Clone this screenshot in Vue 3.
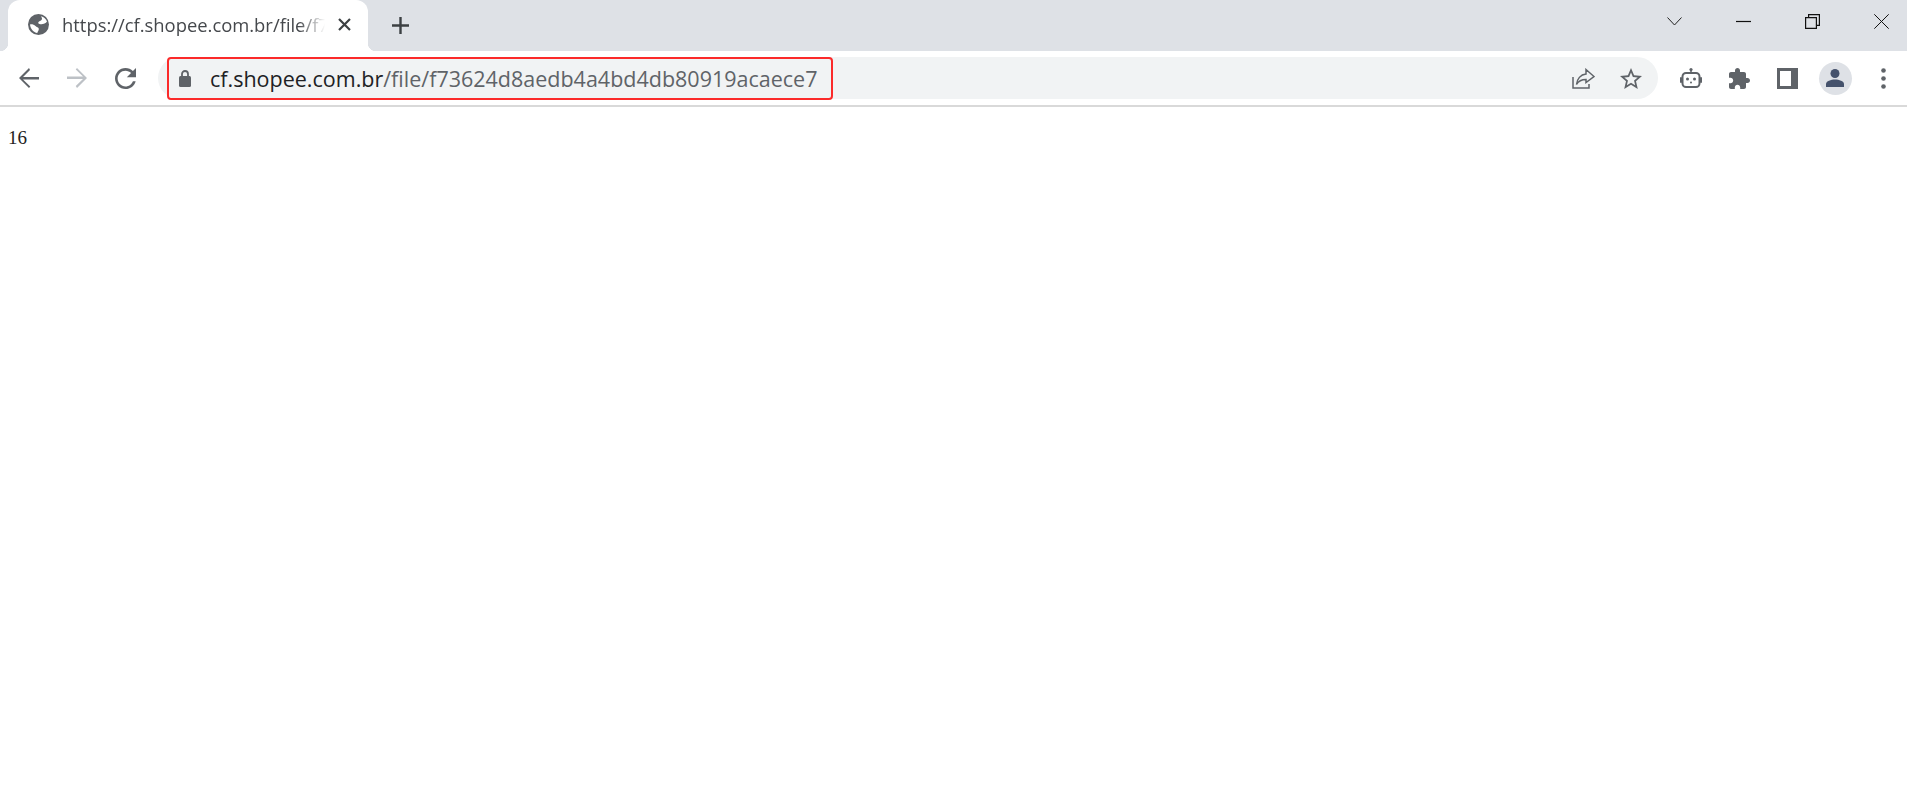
<script setup>
const host = 'cf.shopee.com.br'
const path = '/file/f73624d8aedb4a4bd4db80919acaece7'
</script>

<template>
  <div class="page">
    <div class="tabstrip">
      <div class="tab">
        <svg class="globe" viewBox="0 0 21 21"><circle cx="10.5" cy="10.5" r="10.5" fill="#5f6368"/><path d="M13 2.2 C16 3 18 5 19 7.5 C17.5 10 14 10.5 11.5 10 C10.5 9.8 9.8 9 10.5 8 C11.5 6.8 13.8 6.8 14 5 C14.1 4 13.4 3 13 2.2 Z" fill="#fff"/><path d="M2 10.5 C4 10 6 10.8 7.5 12 C8.5 13 10.5 13.2 10.8 14.8 C11 16.5 9.5 17.5 9.3 19 C5.5 18.5 2.5 15 2 10.5 Z" fill="#fff"/></svg>
        <span class="tab-title">https://cf.shopee.com.br/file/f73624d8aedb4a4bd4db80919acaece7</span>
        <svg class="tab-x" viewBox="0 0 13 13"><path d="M1 1 L12 12 M12 1 L1 12" stroke="#3c4043" stroke-width="2.2"/></svg>
      </div>
      <svg class="plus" viewBox="0 0 17 17"><path d="M8.5 0 V17 M0 8.5 H17" stroke="#3c4043" stroke-width="2.4"/></svg>
      <div class="win">
        <svg class="w" viewBox="0 0 15 15"><path d="M0.5 3.5 L7.5 11 L14.5 3.5" fill="none" stroke="#222" stroke-width="1"/></svg>
        <svg class="w" viewBox="0 0 15 15"><path d="M0 7.5 H15" stroke="#111" stroke-width="1.2"/></svg>
        <svg class="w" viewBox="0 0 15 15"><path d="M0.6 3.6 H11.4 V14.4 H0.6 Z M3.6 3.6 V0.6 H14.4 V11.4 H11.4" fill="none" stroke="#111" stroke-width="1.2"/></svg>
        <svg class="w" viewBox="0 0 15 15"><path d="M0.3 0.3 L14.7 14.7 M14.7 0.3 L0.3 14.7" stroke="#111" stroke-width="1"/></svg>
      </div>
    </div>
    <div class="toolbar">
      <div class="nav">
        <span class="btn"><svg class="ic arrow" viewBox="4 4 16 16"><path d="M20 11.2H7.2l5.6-5.6L12 4l-8 8 8 8 1-1.2-5.8-5.6H20v-2z" fill="#5f6368"/></svg></span>
        <span class="btn"><svg class="ic arrow" viewBox="4 4 16 16"><path d="M12 4l-1 1.2 5.8 5.6H4v2h12.8l-5.8 5.6L12 20l8-8z" fill="#bdc1c6"/></svg></span>
        <span class="btn"><svg class="ic" viewBox="4 4 16 16"><path d="M17.65 6.35C16.2 4.9 14.21 4 12 4c-4.42 0-7.99 3.58-7.99 8s3.57 8 7.99 8c3.73 0 6.84-2.55 7.73-6h-2.08c-.82 2.33-3.04 4-5.65 4-3.31 0-6-2.69-6-6s2.69-6 6-6c1.66 0 3.14.69 4.22 1.78L13 11h7V4l-2.35 2.35z" fill="#5f6368"/></svg></span>
      </div>
      <div class="omni">
        <div class="omni-main">
          <svg class="lock" viewBox="0 0 12 17"><path d="M3 7 V4 A3 3 0 0 1 9 4 V7" fill="none" stroke="#5f6368" stroke-width="1.8"/><rect x="0" y="6" width="12" height="11" rx="1.5" fill="#5f6368"/></svg>
          <span class="url"><span class="host">{{ host }}</span>{{ path }}</span>
          <div class="mark"></div>
        </div>
        <div class="omni-end">
          <span class="btn"><svg class="ic wide" viewBox="0 0 23 21"><path d="M1 9 V20 H17 V16" fill="none" stroke="#5f6368" stroke-width="1.5"/><path d="M14 1.5 L22 8.5 L14 14.5 V11.5 C9.5 11.5 6.5 13 4.5 16.5 C5 11 8.5 6.5 14 6 Z" fill="none" stroke="#5f6368" stroke-width="1.5"/></svg></span>
          <span class="btn"><svg class="star" viewBox="2 2 20 19"><path d="M22 9.24l-7.19-.62L12 2 9.19 8.63 2 9.24l5.46 4.73L5.82 21 12 17.27 18.18 21l-1.63-7.03L22 9.24zM12 15.4l-3.76 2.27 1-4.28-3.32-2.88 4.38-.38L12 6.1l1.71 4.04 4.38.38-3.32 2.88 1 4.28L12 15.4z" fill="#5f6368"/></svg></span>
        </div>
      </div>
      <div class="actions">
        <span class="btn"><svg class="ic robot" viewBox="0 0 22 20"><rect x="2.5" y="5" width="17" height="14" rx="3.5" fill="none" stroke="#5f6368" stroke-width="2"/><rect x="0" y="9" width="2" height="6" rx="1" fill="#5f6368"/><rect x="20" y="9" width="2" height="6" rx="1" fill="#5f6368"/><circle cx="11" cy="1.6" r="1.6" fill="#5f6368"/><path d="M11 2 V5" stroke="#5f6368" stroke-width="1.5"/><circle cx="7.5" cy="11" r="1.5" fill="#5f6368"/><circle cx="14.5" cy="11" r="1.5" fill="#5f6368"/><circle cx="11" cy="14.5" r="1" fill="#5f6368"/></svg></span>
        <span class="btn"><svg class="ic" viewBox="2 1 21 21"><path d="M20.5 11H19V7c0-1.1-.9-2-2-2h-4V3.5C13 2.12 11.88 1 10.5 1S8 2.12 8 3.5V5H4c-1.1 0-1.99.9-1.99 2v3.8H3.5c1.49 0 2.7 1.21 2.7 2.7s-1.21 2.7-2.7 2.7H2V20c0 1.1.9 2 2 2h3.8v-1.5c0-1.49 1.21-2.7 2.7-2.7 1.49 0 2.7 1.21 2.7 2.7V22H17c1.1 0 2-.9 2-2v-4h1.5c1.38 0 2.5-1.12 2.5-2.5S21.88 11 20.5 11z" fill="#5f6368"/></svg></span>
        <span class="btn"><svg class="ic" viewBox="0 0 21 21"><path fill-rule="evenodd" d="M0 0 H21 V21 H0 Z M3 3 V18 H14 V3 Z" fill="#5f6368"/></svg></span>
        <span class="btn"><span class="avatar"><svg viewBox="0 0 18 18"><circle cx="9" cy="4.5" r="4.5" fill="#45526c"/><path d="M0 18 V15 C0 12 5 10.5 9 10.5 C13 10.5 18 12 18 15 V18 Z" fill="#45526c"/></svg></span></span>
        <span class="btn"><svg class="menu" viewBox="0 0 5 21"><circle cx="2.5" cy="2.5" r="2.3" fill="#5f6368"/><circle cx="2.5" cy="10.5" r="2.3" fill="#5f6368"/><circle cx="2.5" cy="18.5" r="2.3" fill="#5f6368"/></svg></span>
      </div>
    </div>
    <div class="content">16</div>
  </div>
</template>

<style scoped>
.page { width: 1907px; height: 793px; background: #fff; overflow: hidden; display: flex; flex-direction: column; }
.tabstrip { height: 51px; background: #dee1e6; display: flex; align-items: flex-end; position: relative; flex: none; }
.tab { position: relative; width: 360px; height: 51px; margin-left: 8px; background: #fff; border-radius: 12px 12px 0 0; display: flex; align-items: center; padding: 0 17px 2px 20px; box-sizing: border-box; }
.tab::before, .tab::after { content: ""; position: absolute; bottom: 0; width: 8px; height: 8px; }
.tab::before { left: -8px; background: radial-gradient(circle at 0 0, transparent 8px, #fff 8.5px); }
.tab::after { right: -8px; background: radial-gradient(circle at 100% 0, transparent 8px, #fff 8.5px); }
.globe { width: 21px; height: 21px; flex: none; }
.tab-title { flex: 1; min-width: 0; margin-left: 13px; white-space: nowrap; overflow: hidden; font: 18.4px "Open Sans", sans-serif; color: #45484c; -webkit-mask-image: linear-gradient(to right, #000 90%, transparent); mask-image: linear-gradient(to right, #000 90%, transparent); }
.tab-x { width: 13px; height: 13px; flex: none; margin-left: 13px; }
.plus { width: 17px; height: 17px; margin: 0 0 17px 24px; flex: none; }
.win { margin-left: auto; align-self: flex-start; display: flex; align-items: center; gap: 54px; padding: 14px 18px 0 0; }
.w { width: 15px; height: 15px; }
.toolbar { height: 56px; box-sizing: border-box; border-bottom: 2px solid #d9d9d9; display: flex; align-items: center; flex: none; background: #fff; }
.nav { display: flex; align-items: center; padding-left: 5px; width: 158px; box-sizing: border-box; flex: none; }
.btn { width: 48px; height: 42px; display: flex; align-items: center; justify-content: center; flex: none; }
.ic { width: 21px; height: 21px; flex: none; }
.ic.arrow { width: 20px; height: 20px; }
.ic.wide { width: 23px; }
.ic.robot { width: 22px; height: 20px; }
.star { width: 22px; height: 21px; flex: none; }
.omni { width: 1500px; height: 42px; background: #f1f3f4; border-radius: 21px; display: flex; align-items: center; justify-content: space-between; flex: none; }
.omni-main { position: relative; height: 42px; display: flex; align-items: center; padding-left: 21px; }
.lock { width: 12px; height: 17px; flex: none; }
.url { margin-left: 19px; font: 21.5px "Open Sans", sans-serif; color: #5f6368; white-space: nowrap; }
.host { color: #202124; }
.mark { position: absolute; left: 9px; top: 0; width: 666px; height: 43px; border: 2px solid #fb2a2a; border-radius: 4px; box-sizing: border-box; }
.omni-end { display: flex; align-items: center; padding-right: 3px; }
.actions { display: flex; align-items: center; padding-left: 9px; }
.avatar { width: 33px; height: 33px; border-radius: 50%; background: #dee1e6; display: flex; align-items: center; justify-content: center; flex: none; }
.avatar svg { width: 18px; height: 18px; }
.menu { width: 5px; height: 21px; }
.content { padding: 20px 0 0 8px; font: 19px/22px "Liberation Serif", serif; color: #222; }
</style>
